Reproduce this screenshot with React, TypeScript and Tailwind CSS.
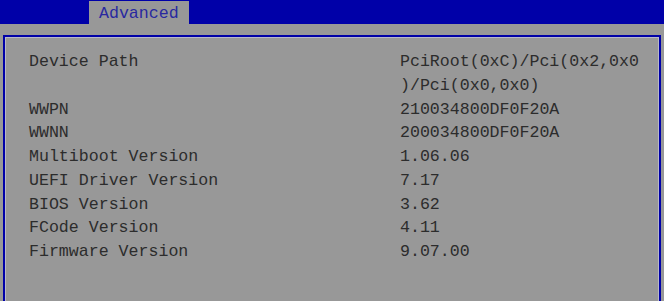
const rows: { label: string; value: string[] }[] = [
  { label: 'Device Path', value: ['PciRoot(0xC)/Pci(0x2,0x0', ')/Pci(0x0,0x0)'] },
  { label: 'WWPN', value: ['210034800DF0F20A'] },
  { label: 'WWNN', value: ['200034800DF0F20A'] },
  { label: 'Multiboot Version', value: ['1.06.06'] },
  { label: 'UEFI Driver Version', value: ['7.17'] },
  { label: 'BIOS Version', value: ['3.62'] },
  { label: 'FCode Version', value: ['4.11'] },
  { label: 'Firmware Version', value: ['9.07.00'] },
]

export default function App() {
  return (
    <div
      className="flex h-[301px] w-[664px] flex-col overflow-hidden bg-[#989898] text-[16.6px] leading-[23.75px]"
      style={{ fontFamily: '"Liberation Mono", "DejaVu Sans Mono", monospace' }}
    >
      <div className="flex h-[24px] shrink-0 bg-[#0000a8]">
        <div className="ml-[89px] mt-[1px] flex h-[23px] w-[100px] items-center bg-[#989898] pl-[10px] pt-[2px] text-[#2828a0]">
          Advanced
        </div>
      </div>

      <div className="mx-[3px] mt-[11px] flex-1 border-x-2 border-t-2 border-[#0000a8]">
        <div className="h-full border-x border-t border-[#b8b8c8] pl-[23px] pt-[12px] text-[#2c2c2c]">
          {rows.map((row) => (
            <div key={row.label} className="flex">
              <div className="w-[371px] shrink-0">{row.label}</div>
              <div className="whitespace-pre">
                {row.value.map((line) => (
                  <div key={line}>{line}</div>
                ))}
              </div>
            </div>
          ))}
        </div>
      </div>
    </div>
  )
}
